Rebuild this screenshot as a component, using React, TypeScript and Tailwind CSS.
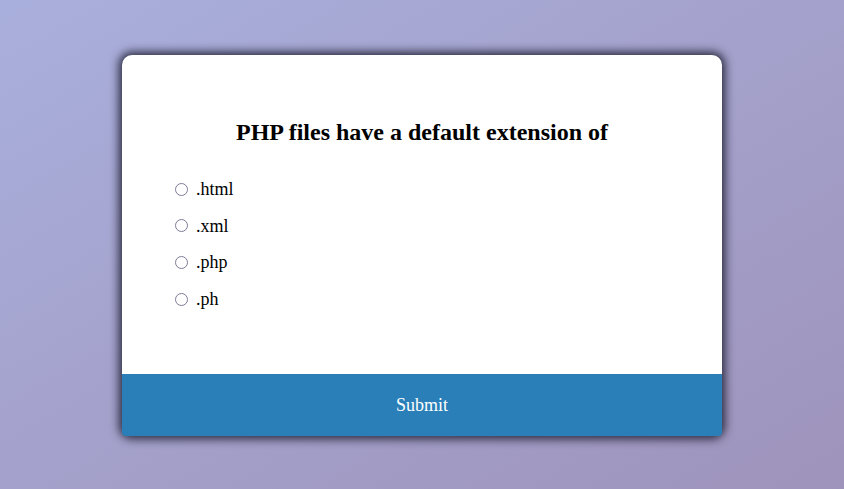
const options = ['.html', '.xml', '.php', '.ph'];

export default function App() {
  return (
    <div className="flex h-screen w-full items-center justify-center bg-gradient-to-br from-[#a9afdc] to-[#9e93bb] font-['Liberation_Serif',serif]">
      <div className="mt-[2px] w-[600px] rounded-[10px] bg-white shadow-[0_0_10px_3px_rgba(35,35,55,0.95)]">
        <div className="p-12">
          <h2 className="m-0 p-4 text-center text-[24px] font-bold leading-[1.15] text-black">
            PHP files have a default extension of
          </h2>
          <ul className="m-0 list-none p-0">
            {options.map((opt) => (
              <li key={opt} className="my-4 flex items-center text-[18px] leading-[1.15] text-black">
                <input
                  type="radio"
                  name="answer"
                  className="ml-[5px] mr-[8px] h-[13px] w-[13px] appearance-none rounded-full border border-[#7c7c98] bg-white"
                />
                <label>{opt}</label>
              </li>
            ))}
          </ul>
        </div>
        <button className="block w-full rounded-b-[4px] bg-[#2a7fb8] py-[21px] text-[18px] leading-[20px] text-white">
          Submit
        </button>
      </div>
    </div>
  );
}
